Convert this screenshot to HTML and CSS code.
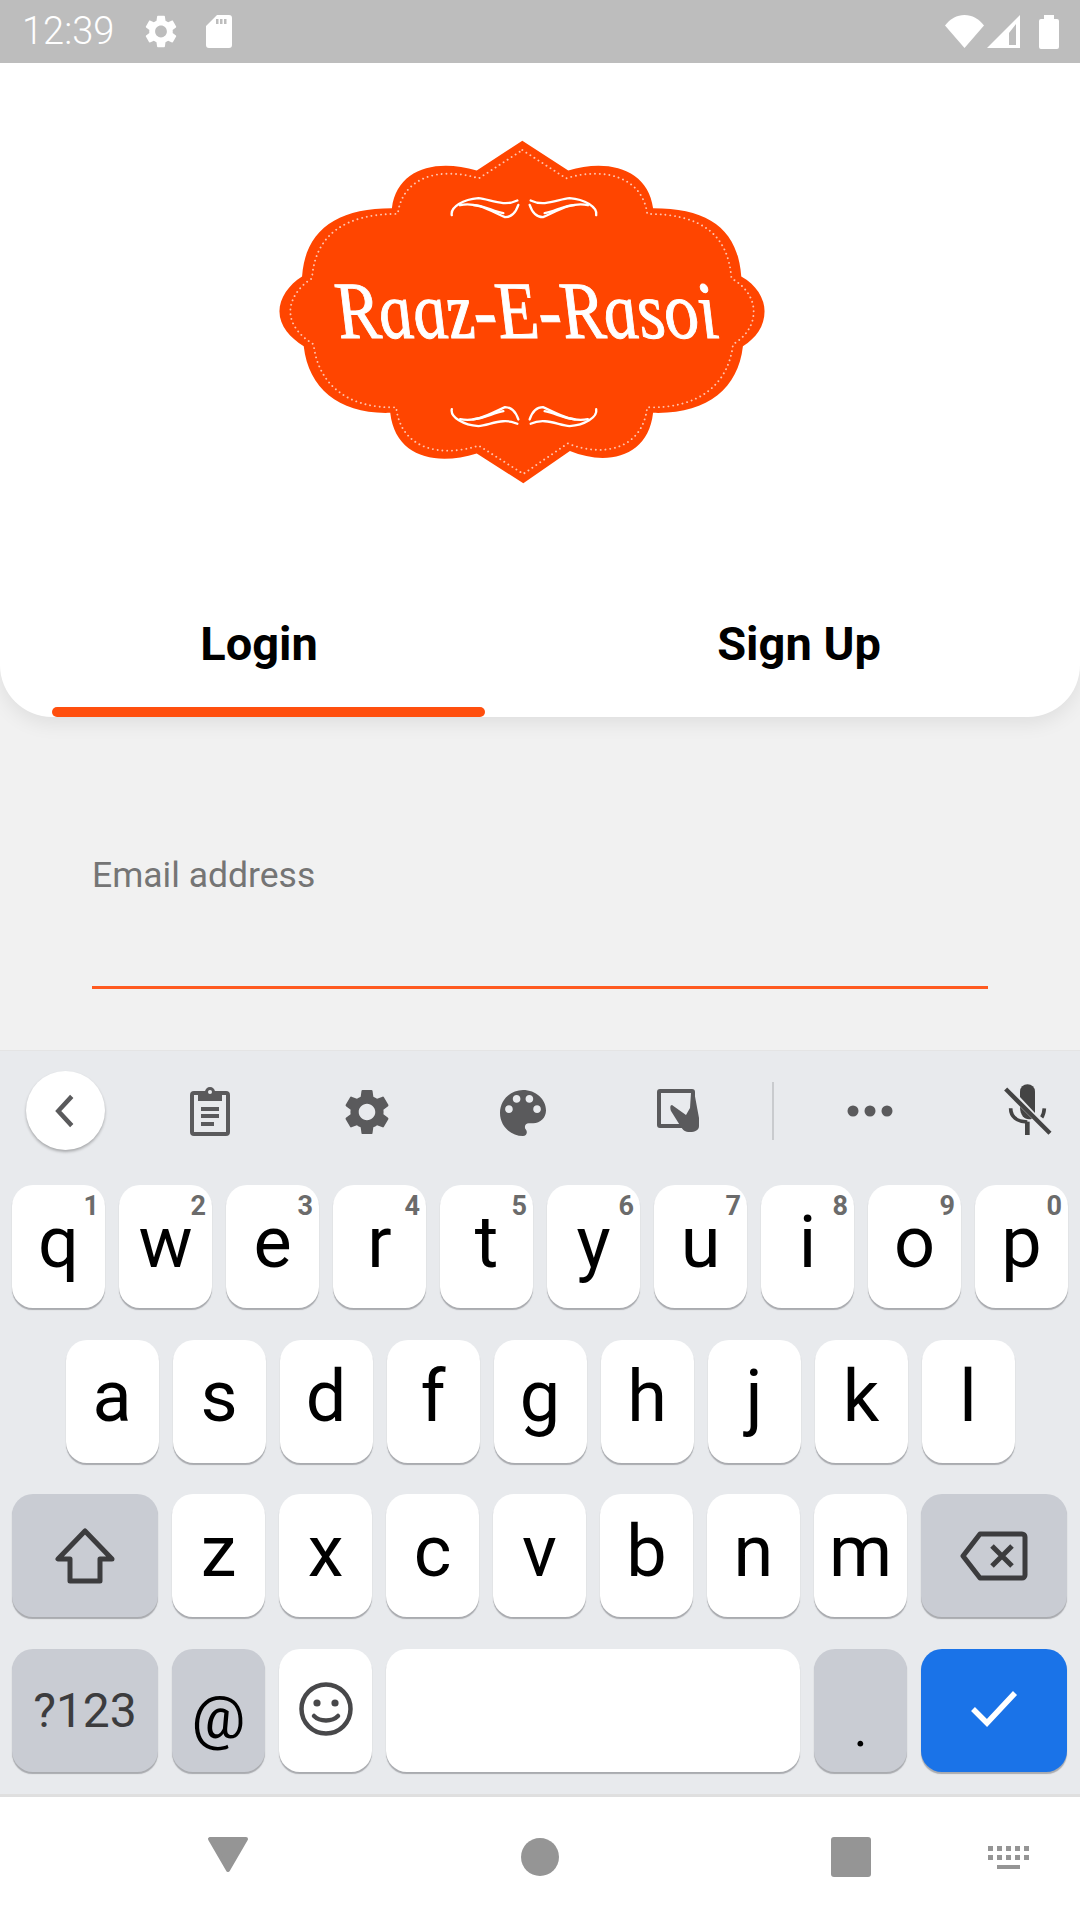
FILE: index.html
```html
<!DOCTYPE html>
<html lang="en">
<head>
<meta charset="utf-8">
<title>Raaz-E-Rasoi Login</title>
<link rel="stylesheet" href="styles.css">
</head>
<body>
<div class="phone">
  <header class="status">
    <span class="clock">12:39</span>
    <svg class="st-gear" viewBox="2.2 2 19.6 20"><path d="M19.14 12.94c.04-.3.06-.61.06-.94 0-.32-.02-.64-.07-.94l2.03-1.58c.18-.14.23-.41.12-.61l-1.92-3.32c-.12-.22-.37-.29-.59-.22l-2.39.96c-.5-.38-1.03-.7-1.62-.94l-.36-2.54c-.04-.24-.24-.41-.48-.41h-3.84c-.24 0-.43.17-.47.41l-.36 2.54c-.59.24-1.13.57-1.62.94l-2.39-.96c-.22-.08-.47 0-.59.22L2.74 8.87c-.12.21-.08.47.12.61l2.03 1.58c-.05.3-.09.63-.09.94s.02.64.07.94l-2.03 1.58c-.18.14-.23.41-.12.61l1.92 3.32c.12.22.37.29.59.22l2.39-.96c.5.38 1.03.7 1.62.94l.36 2.54c.05.24.24.41.48.41h3.84c.24 0 .44-.17.47-.41l.36-2.54c.59-.24 1.13-.56 1.62-.94l2.39.96c.22.08.47 0 .59-.22l1.92-3.32c.12-.22.07-.47-.12-.61l-2.01-1.58zM12 15.6c-1.98 0-3.6-1.62-3.6-3.6s1.62-3.6 3.6-3.6 3.6 1.62 3.6 3.6-1.62 3.6-3.6 3.6z"/></svg>
    <svg class="st-sd" viewBox="0 0 26 33"><path fill-rule="evenodd" d="M11 0h12a3 3 0 0 1 3 3v27a3 3 0 0 1-3 3H3a3 3 0 0 1-3-3V11zM10 4v5h2.5V4zM14 4v5h2.5V4zM18 4v5h2.5V4z"/></svg>
    <span class="status-gap"></span>
    <svg class="st-wifi" viewBox="0 0 39 33"><path d="M19.5 33 0 10.500C5 4 12 0 19.500 0S34 4 39 10.500Z"/></svg>
    <svg class="st-signal" viewBox="0 0 33 33"><path fill-rule="evenodd" d="M33 0V33H0ZM22 18V30H29V9Z"/></svg>
    <svg class="st-batt" viewBox="0 0 20 34"><path d="M5 0h10v4h3a2 2 0 0 1 2 2v26a2 2 0 0 1-2 2H2a2 2 0 0 1-2-2V6a2 2 0 0 1 2-2h3z"/></svg>
  </header>

  <section class="hero">
    <div class="logo-wrap">
      <svg class="logo" viewBox="0 0 1560 1085">
        <defs>
          <path id="badge" d="M787 32 925 122C1040 85 1165 115 1180 235 1350 235 1435 300 1445 440 1490 465 1515 505 1515 545 1515 590 1490 625 1450 650 1435 780 1340 855 1180 850 1165 985 1040 1010 930 965L790 1062 650 972C530 1010 405 985 390 850 240 855 145 780 130 650 90 625 57 590 57 545 57 505 85 465 125 440 135 300 230 235 395 235 410 115 530 85 650 122Z"/>
          <g id="flourish">
            <path d="M575 256C570 232 610 208 655 205 690 208 730 232 772 212"/>
            <path d="M600 226C650 215 695 245 735 262 758 262 770 240 775 225"/>
            <path d="M640 226C670 226 700 245 730 250"/>
          </g>
        </defs>
        <use href="#badge" class="badge-fill"/>
        <use href="#badge" class="badge-dots" transform="translate(787 547) scale(.955 .945) translate(-787 -547)"/>
        <g class="flourishes">
          <use href="#flourish"/>
          <use href="#flourish" transform="translate(1584 0) scale(-1 1)"/>
          <use href="#flourish" transform="translate(0 1095) scale(1 -1)"/>
          <use href="#flourish" transform="translate(1584 1095) scale(-1 -1)"/>
        </g>
        <text class="logo-text" transform="translate(245 624) skewX(15)" x="0" y="0" textLength="1145" lengthAdjust="spacingAndGlyphs">Raaz-E-Rasoi</text>
      </svg>
    </div>
    <nav class="tabs">
      <div class="tab">Login</div>
      <div class="tab">Sign Up</div>
      <span class="indicator"></span>
    </nav>
  </section>

  <main class="form">
    <div class="field">
      <label class="field-label">Email address</label>
    </div>
  </main>

  <section class="keyboard">
    <div class="tools">
      <span class="back"><svg viewBox="0 0 20 32"><path d="M16 3 4 16l12 13"/></svg></span>
      <svg class="tool tool-clip" viewBox="0 0 40 49"><path fill-rule="evenodd" d="M4 4h32a4 4 0 0 1 4 4v37a4 4 0 0 1-4 4H4a4 4 0 0 1-4-4V8a4 4 0 0 1 4-4zM4 8v37h32V8z"/><path d="M15 5a5 5 0 0 1 10 0h7v9H8V5z"/><circle cx="20" cy="5" r="2" class="tool-hole"/><path d="M11 20h18v4H11zM11 27h18v4H11zM11 35h13v4H11z"/></svg>
      <svg class="tool tool-gear" viewBox="2.2 2 19.6 20"><path d="M19.14 12.94c.04-.3.06-.61.06-.94 0-.32-.02-.64-.07-.94l2.03-1.58c.18-.14.23-.41.12-.61l-1.92-3.32c-.12-.22-.37-.29-.59-.22l-2.39.96c-.5-.38-1.03-.7-1.62-.94l-.36-2.54c-.04-.24-.24-.41-.48-.41h-3.84c-.24 0-.43.17-.47.41l-.36 2.54c-.59.24-1.13.57-1.62.94l-2.39-.96c-.22-.08-.47 0-.59.22L2.74 8.87c-.12.21-.08.47.12.61l2.03 1.58c-.05.3-.09.63-.09.94s.02.64.07.94l-2.03 1.58c-.18.14-.23.41-.12.61l1.92 3.32c.12.22.37.29.59.22l2.39-.96c.5.38 1.03.7 1.62.94l.36 2.54c.05.24.24.41.48.41h3.84c.24 0 .44-.17.47-.41l.36-2.54c.59-.24 1.13-.56 1.62-.94l2.39.96c.22.08.47 0 .59-.22l1.92-3.32c.12-.22.07-.47-.12-.61l-2.01-1.58zM12 15.6c-1.98 0-3.6-1.62-3.6-3.6s1.62-3.6 3.6-3.6 3.6 1.62 3.6 3.6-1.62 3.6-3.6 3.6z"/></svg>
      <svg class="tool tool-palette" viewBox="3 3 18 18"><path d="M12 3c-4.97 0-9 4.03-9 9s4.03 9 9 9c.83 0 1.5-.67 1.5-1.5 0-.39-.15-.74-.39-1.01-.23-.26-.38-.61-.38-.99 0-.83.67-1.5 1.5-1.5H16c2.76 0 5-2.24 5-5 0-4.42-4.03-8-9-8zm-5.5 9c-.83 0-1.5-.67-1.5-1.5S5.67 9 6.5 9 8 9.67 8 10.5 7.33 12 6.5 12zm3-4C8.67 8 8 7.33 8 6.5S8.67 5 9.5 5s1.5.67 1.5 1.5S10.33 8 9.5 8zm5 0c-.83 0-1.5-.67-1.5-1.5S13.67 5 14.5 5s1.5.67 1.500 1.5S15.33 8 14.5 8zm3 4c-.83 0-1.5-.67-1.5-1.5S16.67 9 17.5 9s1.5.67 1.5 1.5-.67 1.5-1.5 1.5z"/></svg>
      <svg class="tool tool-tablet" viewBox="0 0 42 43"><path fill-rule="evenodd" d="M3 0h32a3 3 0 0 1 3 3v33a3 3 0 0 1-3 3H3a3 3 0 0 1-3-3V3a3 3 0 0 1 3-3zM4 4v31h30V4z"/><path d="M37 2 42 29v8c0 4-4 6-9 6s-7-2-9-5L14 22c-1-3-1-6 1-6l14 10 4-7 1-15z"/></svg>
      <span class="divider"></span>
      <svg class="tool tool-dots" viewBox="0 0 46 12"><circle cx="6" cy="6" r="5.500"/><circle cx="23" cy="6" r="5.500"/><circle cx="40" cy="6" r="5.500"/></svg>
      <svg class="tool tool-mic" viewBox="0 0 210 210">
        <path d="M90 50a22.500 22.500 0 0 1 45 0v64L90 66z" class="mic-dark"/>
        <path d="M90 95 126 131C108 137 90 125 90 95z" class="mic-dark"/>
        <path d="M62 100C62 125 80 140 112 141" class="mic-line"/>
        <path d="M163 100C162 112 160 120 155 127" class="mic-line"/>
        <path d="M112 140V180" class="mic-stem"/>
        <path d="M47 42 180 175" class="mic-slash"/>
      </svg>
    </div>

    <div class="rows">
      <div class="row">
        <div class="key letter"><sup class="hint">1</sup>q</div>
        <div class="key letter"><sup class="hint">2</sup>w</div>
        <div class="key letter"><sup class="hint">3</sup>e</div>
        <div class="key letter"><sup class="hint">4</sup>r</div>
        <div class="key letter"><sup class="hint">5</sup>t</div>
        <div class="key letter"><sup class="hint">6</sup>y</div>
        <div class="key letter"><sup class="hint">7</sup>u</div>
        <div class="key letter"><sup class="hint">8</sup>i</div>
        <div class="key letter"><sup class="hint">9</sup>o</div>
        <div class="key letter"><sup class="hint">0</sup>p</div>
      </div>
      <div class="row row-home">
        <div class="key letter">a</div>
        <div class="key letter">s</div>
        <div class="key letter">d</div>
        <div class="key letter">f</div>
        <div class="key letter">g</div>
        <div class="key letter">h</div>
        <div class="key letter">j</div>
        <div class="key letter">k</div>
        <div class="key letter">l</div>
      </div>
      <div class="row">
        <div class="key wide fn"><svg class="ico-shift" viewBox="0 0 60 56"><path d="M30 3 3 31h12v22h30V31h12z"/></svg></div>
        <div class="key letter">z</div>
        <div class="key letter">x</div>
        <div class="key letter">c</div>
        <div class="key letter">v</div>
        <div class="key letter">b</div>
        <div class="key letter">n</div>
        <div class="key letter">m</div>
        <div class="key wide fn"><svg class="ico-back" viewBox="0 0 68 50"><path d="M20 3h42a3 3 0 0 1 3 3v38a3 3 0 0 1-3 3H20L3 25z"/><path d="M32 15l20 20M52 15 32 35"/></svg></div>
      </div>
      <div class="row">
        <div class="key wide fn sym">?123</div>
        <div class="key fn at">@</div>
        <div class="key"><svg class="ico-smile" viewBox="0 0 54 54"><circle cx="27" cy="27" r="24.500"/><circle cx="18" cy="21" r="3.600" class="smile-eye"/><circle cx="36" cy="21" r="3.600" class="smile-eye"/><path d="M15 34c6 6 18 6 24 0"/></svg></div>
        <div class="key space"></div>
        <div class="key fn dot">.</div>
        <div class="key wide enter"><svg class="ico-check" viewBox="0 0 48 38"><path d="M3 19l14 14L45 3"/></svg></div>
      </div>
    </div>
  </section>

  <footer class="navbar">
    <svg class="nav-back" viewBox="0 0 42 37"><path d="M3 3h36L21 34z"/></svg>
    <span class="nav-home"></span>
    <span class="nav-recent"></span>
    <svg class="nav-kbd" viewBox="0 0 41 23"><path d="M0 0h5v5H0zM9 0h5v5H9zM18 0h5v5h-5zM27 0h5v5h-5zM36 0h5v5h-5zM0 9h5v5H0zM9 9h5v5H9zM18 9h5v5h-5zM27 9h5v5h-5zM36 9h5v5h-5zM9 19h23v4H9z"/></svg>
  </footer>
</div>
</body>
</html>
```
FILE: styles.css
```css
* { box-sizing: border-box; }
html, body { margin: 0; padding: 0; }
body { width: 1080px; height: 1920px; overflow: hidden; font-family: Roboto, "Liberation Sans", sans-serif; background: #f1f1f1; }
.phone { width: 1080px; height: 1920px; display: flex; flex-direction: column; overflow: hidden; }

.status { height: 63px; flex: none; background: #bdbdbd; display: flex; align-items: center; padding: 0 21px 0 22px; fill: #fff; position: relative; z-index: 3; }
.clock { color: #fff; font-size: 38px; line-height: 63px; font-weight: 300; width: 123px; }
.st-gear { width: 32px; height: 33px; }
.st-sd { width: 26px; height: 33px; margin-left: 29px; }
.status-gap { flex: 1; }
.st-wifi { width: 39px; height: 33px; }
.st-signal { width: 33px; height: 33px; margin-left: 3px; }
.st-batt { width: 20px; height: 34px; margin-left: 19px; }

.hero { height: 654px; flex: none; background: #fff; border-radius: 0 0 52px 52px; box-shadow: 0 6px 20px rgba(0,0,0,.08); position: relative; z-index: 2; display: flex; flex-direction: column; }
.logo-wrap { height: 530px; padding: 67px 0 0 260px; }
.logo { display: block; width: 520px; height: 361px; overflow: visible; filter: blur(.7px); }
.badge-fill { fill: #ff4500; }
.badge-dots { fill: none; stroke: #ffc4ae; stroke-width: 6; stroke-linecap: round; stroke-dasharray: .1 15; }
.flourishes { fill: none; stroke: #fff; stroke-width: 7; stroke-linecap: round; }
.logo-text { fill: #fff; stroke: #fff; stroke-width: 3; font-family: "Liberation Serif", serif; font-style: italic; font-size: 245px; }

.tabs { flex: 1; display: grid; grid-template-columns: 518px 562px; position: relative; }
.tab { font-size: 47px; font-weight: 700; color: #000; text-align: center; line-height: 54px; padding-top: 24px; }
.indicator { position: absolute; left: 52px; bottom: 0; width: 433px; height: 10px; background: #ff4f0e; border-radius: 5px; }

.form { flex: 1; padding: 0 92px; }
.field { height: 272px; padding-top: 137px; border-bottom: 3px solid #ff5a20; }
.field-label { display: block; color: #757575; font-size: 35.5px; line-height: 42px; }

.keyboard { height: 747px; flex: none; background: #e8eaed; border-top: 1px solid #e4e4e4; border-bottom: 3px solid #dfdfdf; display: flex; flex-direction: column; fill: #5a5a5c; }
.tools { height: 134px; flex: none; position: relative; }
.tool { position: absolute; display: block; }
.tool-hole { fill: #e8eaed; }
.back { position: absolute; left: 26px; top: 20px; width: 79px; height: 79px; border-radius: 50%; background: #fff; box-shadow: 0 2px 3px rgba(0,0,0,.28); display: flex; align-items: center; justify-content: center; }
.back svg { width: 24px; height: 36px; margin-right: 2px; fill: none; stroke: #5a5a5c; stroke-width: 4; }
.tool-clip { left: 190px; top: 36px; width: 40px; height: 49px; }
.tool-gear { left: 344px; top: 38px; width: 46px; height: 46px; }
.tool-palette { left: 500px; top: 39px; width: 46px; height: 46px; }
.tool-tablet { left: 657px; top: 38px; width: 42px; height: 43px; }
.divider { position: absolute; left: 772px; top: 31px; width: 2px; height: 58px; background: #c9cbce; }
.tool-dots { left: 847px; top: 54px; width: 46px; height: 12px; }
.tool-mic { left: 990px; top: 24px; width: 70px; height: 70px; }
.mic-dark { fill: #444; }
.mic-slash { fill: none; stroke: #444; stroke-width: 13; }
.mic-line { fill: none; stroke: #444; stroke-width: 11; }
.mic-stem { fill: none; stroke: #444; stroke-width: 14; }

.rows { display: flex; flex-direction: column; gap: 31.67px; padding: 0 12px; }
.row { display: flex; gap: 14px; height: 123px; }
.row-home { padding-left: 53.5px; }
.key { width: 93px; height: 123px; flex: none; background: #fff; border-radius: 21px; box-shadow: 0 2px 1px -0.5px #a9abaf; display: flex; align-items: center; justify-content: center; position: relative; color: #000; }
.letter { font-size: 72px; line-height: 1; padding-bottom: 8px; }
.hint { position: absolute; top: 11px; right: 6px; font-size: 27px; line-height: 20px; font-weight: 700; color: #6b6b6b; vertical-align: baseline; }
.wide { width: 146px; }
.fn { background: #c9ccd3; }
.sym { font-size: 48px; color: #3c3c3e; }
.at { font-size: 60px; padding-top: 14px; }
.dot { font-size: 52px; padding-top: 36px; }
.space { width: 414px; }
.enter { background: #1a73e8; }
.ico-shift { width: 60px; height: 56px; fill: none; stroke: #3c3c3e; stroke-width: 5; stroke-linejoin: round; }
.ico-back { width: 68px; height: 50px; fill: none; stroke: #3c3c3e; stroke-width: 5; stroke-linejoin: round; }
.ico-smile { width: 54px; height: 54px; fill: none; stroke: #48484a; stroke-width: 4.5; stroke-linecap: round; margin-top: -3px; }
.smile-eye { fill: #48484a; stroke: none; }
.ico-check { width: 48px; height: 38px; fill: none; stroke: #fff; stroke-width: 5.5; margin-top: -2px; }

.navbar { height: 123px; flex: none; background: #fff; position: relative; fill: #959595; stroke: #959595; }
.nav-back { position: absolute; left: 207px; top: 39px; width: 42px; height: 37px; stroke-width: 4; stroke-linejoin: round; }
.nav-home { position: absolute; left: 521px; top: 41px; width: 38px; height: 38px; border-radius: 50%; background: #959595; }
.nav-recent { position: absolute; left: 831px; top: 40px; width: 40px; height: 40px; border-radius: 3px; background: #959595; }
.nav-kbd { position: absolute; left: 988px; top: 49px; width: 41px; height: 23px; stroke: none; }
```
